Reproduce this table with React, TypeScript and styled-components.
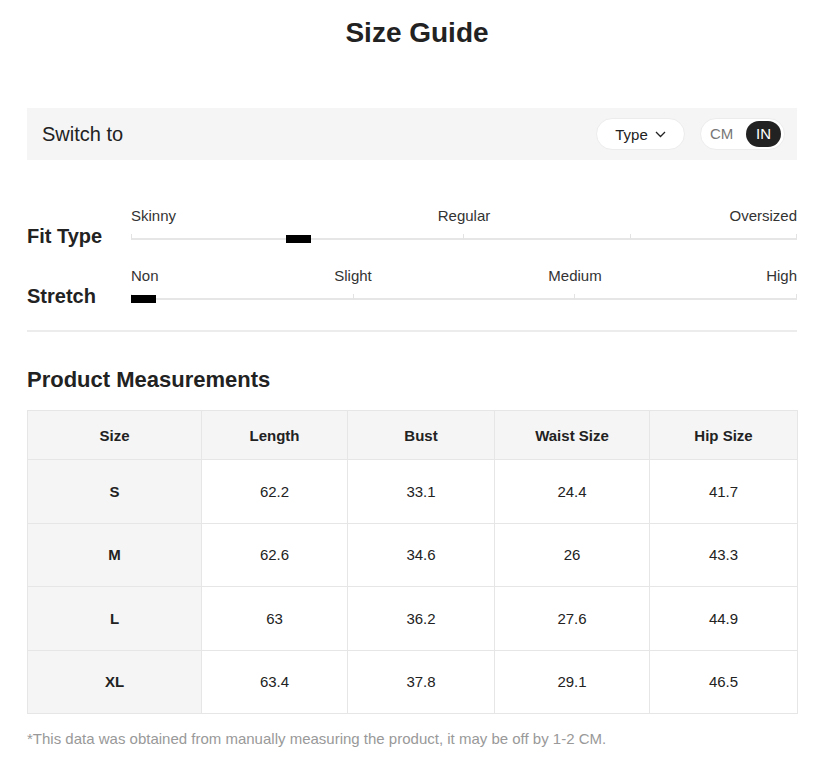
import React from "react";
import styled, { createGlobalStyle } from "styled-components";

const Global = createGlobalStyle`
  html, body { margin: 0; padding: 0; background: #fff; }
  body { font-family: "Liberation Sans", Arial, sans-serif; color: #222; }
`;

const Page = styled.div`
  width: 770px;
  padding: 0 0 0 27px;
`;

const Title = styled.h1`
  margin: 0;
  padding: 18px 0 0 10px;
  height: 90px;
  box-sizing: border-box;
  text-align: center;
  font-size: 28px;
  font-weight: 700;
  line-height: 30px;
  color: #222;
`;

const SwitchBar = styled.div`
  height: 52px;
  margin-top: 18px;
  background: #f5f5f5;
  display: flex;
  align-items: center;
  padding: 0 12px 0 15px;
`;

const SwitchLabel = styled.span`
  flex: 1;
  font-size: 20px;
  color: #222;
`;

const Pill = styled.div`
  height: 32px;
  box-sizing: border-box;
  border: 1px solid #ececec;
  background: #fff;
  border-radius: 16px;
  display: flex;
  align-items: center;
`;

const TypePill = styled(Pill)`
  width: 89px;
  justify-content: center;
  gap: 7px;
  font-size: 15px;
  color: #222;
  margin-right: 15px;
`;

const UnitPill = styled(Pill)`
  width: 85px;
  padding: 0 3px 0 9px;
  justify-content: space-between;
`;

const Unit = styled.span<{ $active?: boolean }>`
  font-size: 15px;
  height: 26px;
  line-height: 26px;
  border-radius: 13px;
  padding: ${(p) => (p.$active ? "0 10px" : "0")};
  background: ${(p) => (p.$active ? "#222" : "transparent")};
  color: ${(p) => (p.$active ? "#fff" : "#777")};
`;

const Scales = styled.div`
  padding-top: 44px;
  display: flex;
  flex-direction: column;
  gap: 24px;
  padding-bottom: 30px;
  border-bottom: 2px solid #ececec;
`;

const ScaleRow = styled.div`
  display: flex;
  align-items: flex-end;
  height: 36px;
`;

const ScaleLabel = styled.div`
  width: 104px;
  font-size: 20px;
  font-weight: 700;
  color: #222;
  line-height: 20px;
  margin-bottom: -6px;
`;

const ScaleBody = styled.div`
  flex: 1;
  display: flex;
  flex-direction: column;
  gap: 10px;
`;

const Labels = styled.div<{ $cols: number }>`
  display: grid;
  grid-template-columns: repeat(${(p) => p.$cols}, 1fr);
  font-size: 15px;
  color: #333;
  line-height: 17px;
`;

const TickLabel = styled.span<{ $align: "left" | "center" | "right" }>`
  text-align: ${(p) => p.$align};
  white-space: nowrap;
`;

const Track = styled.div`
  position: relative;
  display: flex;
  height: 6px;
`;

const Segment = styled.div<{ $grow: number; $last?: boolean }>`
  flex: ${(p) => p.$grow};
  box-sizing: border-box;
  border-bottom: 2px solid #e6e6e6;
  border-left: 1px solid #e3e3e3;
  ${(p) => (p.$last ? "border-right: 1px solid #e3e3e3;" : "")}
`;

const Marker = styled.div`
  position: absolute;
  top: 1px;
  width: 25px;
  height: 8px;
  background: #000;
`;

const SectionTitle = styled.h2`
  margin: 0;
  padding: 35px 0 17px;
  font-size: 22px;
  font-weight: 700;
  line-height: 26px;
  color: #222;
`;

const Table = styled.table`
  width: 770px;
  border-collapse: collapse;
  table-layout: fixed;
  font-size: 15px;
`;

const HeadCell = styled.th`
  height: 48px;
  padding: 0;
  background: #f5f5f5;
  border: 1px solid #e6e6e6;
  font-weight: 700;
  color: #222;
  text-align: center;
`;

const Cell = styled.td<{ $head?: boolean }>`
  height: 62.5px;
  padding: 0;
  border: 1px solid #e6e6e6;
  text-align: center;
  color: #222;
  background: ${(p) => (p.$head ? "#f5f5f5" : "#fff")};
  font-weight: ${(p) => (p.$head ? 700 : 400)};
`;

const Note = styled.p`
  margin: 16px 0 0;
  font-size: 15px;
  color: #999;
`;

const Chevron = () => (
  <svg width="11" height="7" viewBox="0 0 11 7" fill="none">
    <path d="M1 1l4.5 4.5L10 1" stroke="#222" strokeWidth="1.3" />
  </svg>
);

type Scale = {
  name: string;
  cols: number;
  labels: { text: string; col: string; align: "left" | "center" | "right" }[];
  segments: number[];
  marker: number;
};

const scales: Scale[] = [
  {
    name: "Fit Type",
    cols: 4,
    labels: [
      { text: "Skinny", col: "1 / 2", align: "left" },
      { text: "Regular", col: "2 / 4", align: "center" },
      { text: "Oversized", col: "4 / 5", align: "right" },
    ],
    segments: [2, 1, 1],
    marker: 23.3,
  },
  {
    name: "Stretch",
    cols: 6,
    labels: [
      { text: "Non", col: "1 / 2", align: "left" },
      { text: "Slight", col: "2 / 4", align: "center" },
      { text: "Medium", col: "4 / 6", align: "center" },
      { text: "High", col: "6 / 7", align: "right" },
    ],
    segments: [1, 1, 1],
    marker: 0,
  },
];

const columns = ["Size", "Length", "Bust", "Waist Size", "Hip Size"];
const widths = [174, 146, 147, 155, 148];
const rows = [
  ["S", "62.2", "33.1", "24.4", "41.7"],
  ["M", "62.6", "34.6", "26", "43.3"],
  ["L", "63", "36.2", "27.6", "44.9"],
  ["XL", "63.4", "37.8", "29.1", "46.5"],
];

export default function App() {
  return (
    <>
      <Global />
      <Page>
        <Title>Size Guide</Title>
        <SwitchBar>
          <SwitchLabel>Switch to</SwitchLabel>
          <TypePill>
            <span>Type</span>
            <Chevron />
          </TypePill>
          <UnitPill>
            <Unit>CM</Unit>
            <Unit $active>IN</Unit>
          </UnitPill>
        </SwitchBar>
        <Scales>
          {scales.map((s) => (
            <ScaleRow key={s.name}>
              <ScaleLabel>{s.name}</ScaleLabel>
              <ScaleBody>
                <Labels $cols={s.cols}>
                  {s.labels.map((l) => (
                    <TickLabel key={l.text} $align={l.align} style={{ gridColumn: l.col }}>
                      {l.text}
                    </TickLabel>
                  ))}
                </Labels>
                <Track>
                  {s.segments.map((g, i) => (
                    <Segment key={i} $grow={g} $last={i === s.segments.length - 1} />
                  ))}
                  <Marker style={{ left: `${s.marker}%` }} />
                </Track>
              </ScaleBody>
            </ScaleRow>
          ))}
        </Scales>
        <SectionTitle>Product Measurements</SectionTitle>
        <Table>
          <colgroup>
            {widths.map((w, i) => (
              <col key={i} style={{ width: w }} />
            ))}
          </colgroup>
          <thead>
            <tr>
              {columns.map((c) => (
                <HeadCell key={c}>{c}</HeadCell>
              ))}
            </tr>
          </thead>
          <tbody>
            {rows.map((r) => (
              <tr key={r[0]}>
                {r.map((v, i) => (
                  <Cell key={i} $head={i === 0}>
                    {v}
                  </Cell>
                ))}
              </tr>
            ))}
          </tbody>
        </Table>
        <Note>*This data was obtained from manually measuring the product, it may be off by 1-2 CM.</Note>
      </Page>
    </>
  );
}
